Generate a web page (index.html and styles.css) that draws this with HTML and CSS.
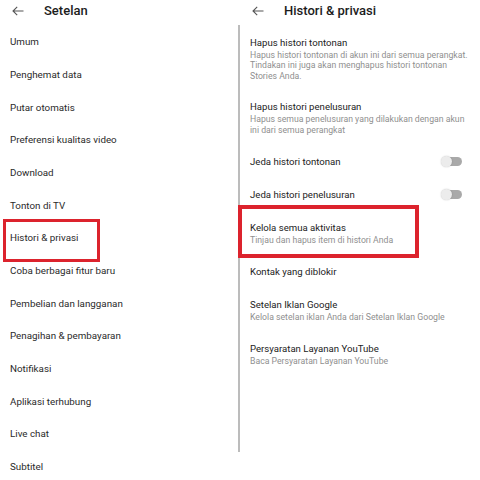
FILE: index.html
```html
<!DOCTYPE html>
<html lang="id">
<head>
<meta charset="utf-8">
<title>Setelan - Histori &amp; privasi</title>
<link rel="stylesheet" href="styles.css">
</head>
<body>
<div class="page">
  <section class="panel panel-left">
    <header class="bar">
      <svg class="back" width="12" height="10" viewBox="0 0 12 10"><path d="M11.5 5H1M5.2 0.8L1 5l4.2 4.2" fill="none" stroke="#555" stroke-width="1.1"/></svg>
      <h1 class="bar-title">Setelan</h1>
    </header>
    <ul class="menu">
      <li class="menu-item">Umum</li>
      <li class="menu-item">Penghemat data</li>
      <li class="menu-item">Putar otomatis</li>
      <li class="menu-item">Preferensi kualitas video</li>
      <li class="menu-item">Download</li>
      <li class="menu-item">Tonton di TV</li>
      <li class="menu-item">Histori &amp; privasi</li>
      <li class="menu-item">Coba berbagai fitur baru</li>
      <li class="menu-item">Pembelian dan langganan</li>
      <li class="menu-item">Penagihan &amp; pembayaran</li>
      <li class="menu-item">Notifikasi</li>
      <li class="menu-item">Aplikasi terhubung</li>
      <li class="menu-item">Live chat</li>
      <li class="menu-item">Subtitel</li>
    </ul>
  </section>
  <div class="divider"></div>
  <section class="panel panel-right">
    <header class="bar">
      <svg class="back" width="12" height="10" viewBox="0 0 12 10"><path d="M11.5 5H1M5.2 0.8L1 5l4.2 4.2" fill="none" stroke="#555" stroke-width="1.1"/></svg>
      <h1 class="bar-title">Histori &amp; privasi</h1>
    </header>
    <ul class="opts">
      <li class="opt">
        <div class="opt-text">
          <div class="opt-title">Hapus histori tontonan</div>
          <div class="opt-sub">Hapus histori tontonan di akun ini dari semua perangkat.<br>Tindakan ini juga akan menghapus histori tontonan<br>Stories Anda.</div>
        </div>
      </li>
      <li class="opt">
        <div class="opt-text">
          <div class="opt-title">Hapus histori penelusuran</div>
          <div class="opt-sub">Hapus semua penelusuran yang dilakukan dengan akun<br>ini dari semua perangkat</div>
        </div>
      </li>
      <li class="opt">
        <div class="opt-text"><div class="opt-title">Jeda histori tontonan</div></div>
        <span class="toggle"></span>
      </li>
      <li class="opt">
        <div class="opt-text"><div class="opt-title">Jeda histori penelusuran</div></div>
        <span class="toggle"></span>
      </li>
      <li class="opt">
        <div class="opt-text">
          <div class="opt-title">Kelola semua aktivitas</div>
          <div class="opt-sub">Tinjau dan hapus item di histori Anda</div>
        </div>
      </li>
      <li class="opt">
        <div class="opt-text"><div class="opt-title">Kontak yang diblokir</div></div>
      </li>
      <li class="opt">
        <div class="opt-text">
          <div class="opt-title">Setelan Iklan Google</div>
          <div class="opt-sub">Kelola setelan iklan Anda dari Setelan Iklan Google</div>
        </div>
      </li>
      <li class="opt">
        <div class="opt-text">
          <div class="opt-title">Persyaratan Layanan YouTube</div>
          <div class="opt-sub">Baca Persyaratan Layanan YouTube</div>
        </div>
      </li>
    </ul>
  </section>
  <div class="mark mark-left"></div>
  <div class="mark mark-right"></div>
</div>
</body>
</html>
```
FILE: styles.css
```css
* { box-sizing: border-box; }
html, body { margin: 0; padding: 0; background: #fff; }
body { font-family: Roboto, "Liberation Sans", sans-serif; color: #222; }
.page { position: relative; width: 480px; height: 480px; display: flex; overflow: hidden; background: #fff; }
.panel { display: flex; flex-direction: column; }
.panel-left { width: 238px; }
.panel-right { width: 240px; }
.divider { width: 2px; margin-top: 25px; height: 427px; background: #bcbcbc; }
.bar { height: 26px; display: flex; align-items: flex-start; padding-top: 4px; }
.back { margin: 2px 0 0 12px; flex: none; }
.bar-title { margin: 0 0 0 20px; font-size: 13px; line-height: 14px; font-weight: 500; color: #1c1c1c; }
.menu, .opts { list-style: none; margin: 0; padding: 0; }
.menu-item { height: 32.7px; display: flex; align-items: center; padding: 7px 0 0 10px; font-size: 9.8px; line-height: 14px; color: #2a2a2a; white-space: nowrap; }
.opt { display: flex; align-items: center; justify-content: space-between; padding: 9.65px 18px 9.65px 10px; }
.opt-title { font-size: 9.6px; line-height: 14px; color: #222; white-space: nowrap; }
.opt-sub { font-size: 8.7px; line-height: 10.5px; color: #8f8f8f; white-space: nowrap; }
.toggle { position: relative; width: 21px; height: 11px; flex: none; }
.toggle::before { content: ""; position: absolute; right: 0; top: 1px; width: 18px; height: 9px; border-radius: 5px; background: #a9a9a9; }
.toggle::after { content: ""; position: absolute; left: 0; top: 0; width: 11px; height: 11px; border-radius: 50%; background: #ececec; box-shadow: 0 0 1.5px rgba(0,0,0,0.25); }
.mark { position: absolute; border: 3px solid #dc232d; }
.mark-left { left: 3px; top: 219px; width: 97px; height: 43px; }
.mark-right { left: 238px; top: 205px; width: 181px; height: 53px; border-width: 4px; }
```
